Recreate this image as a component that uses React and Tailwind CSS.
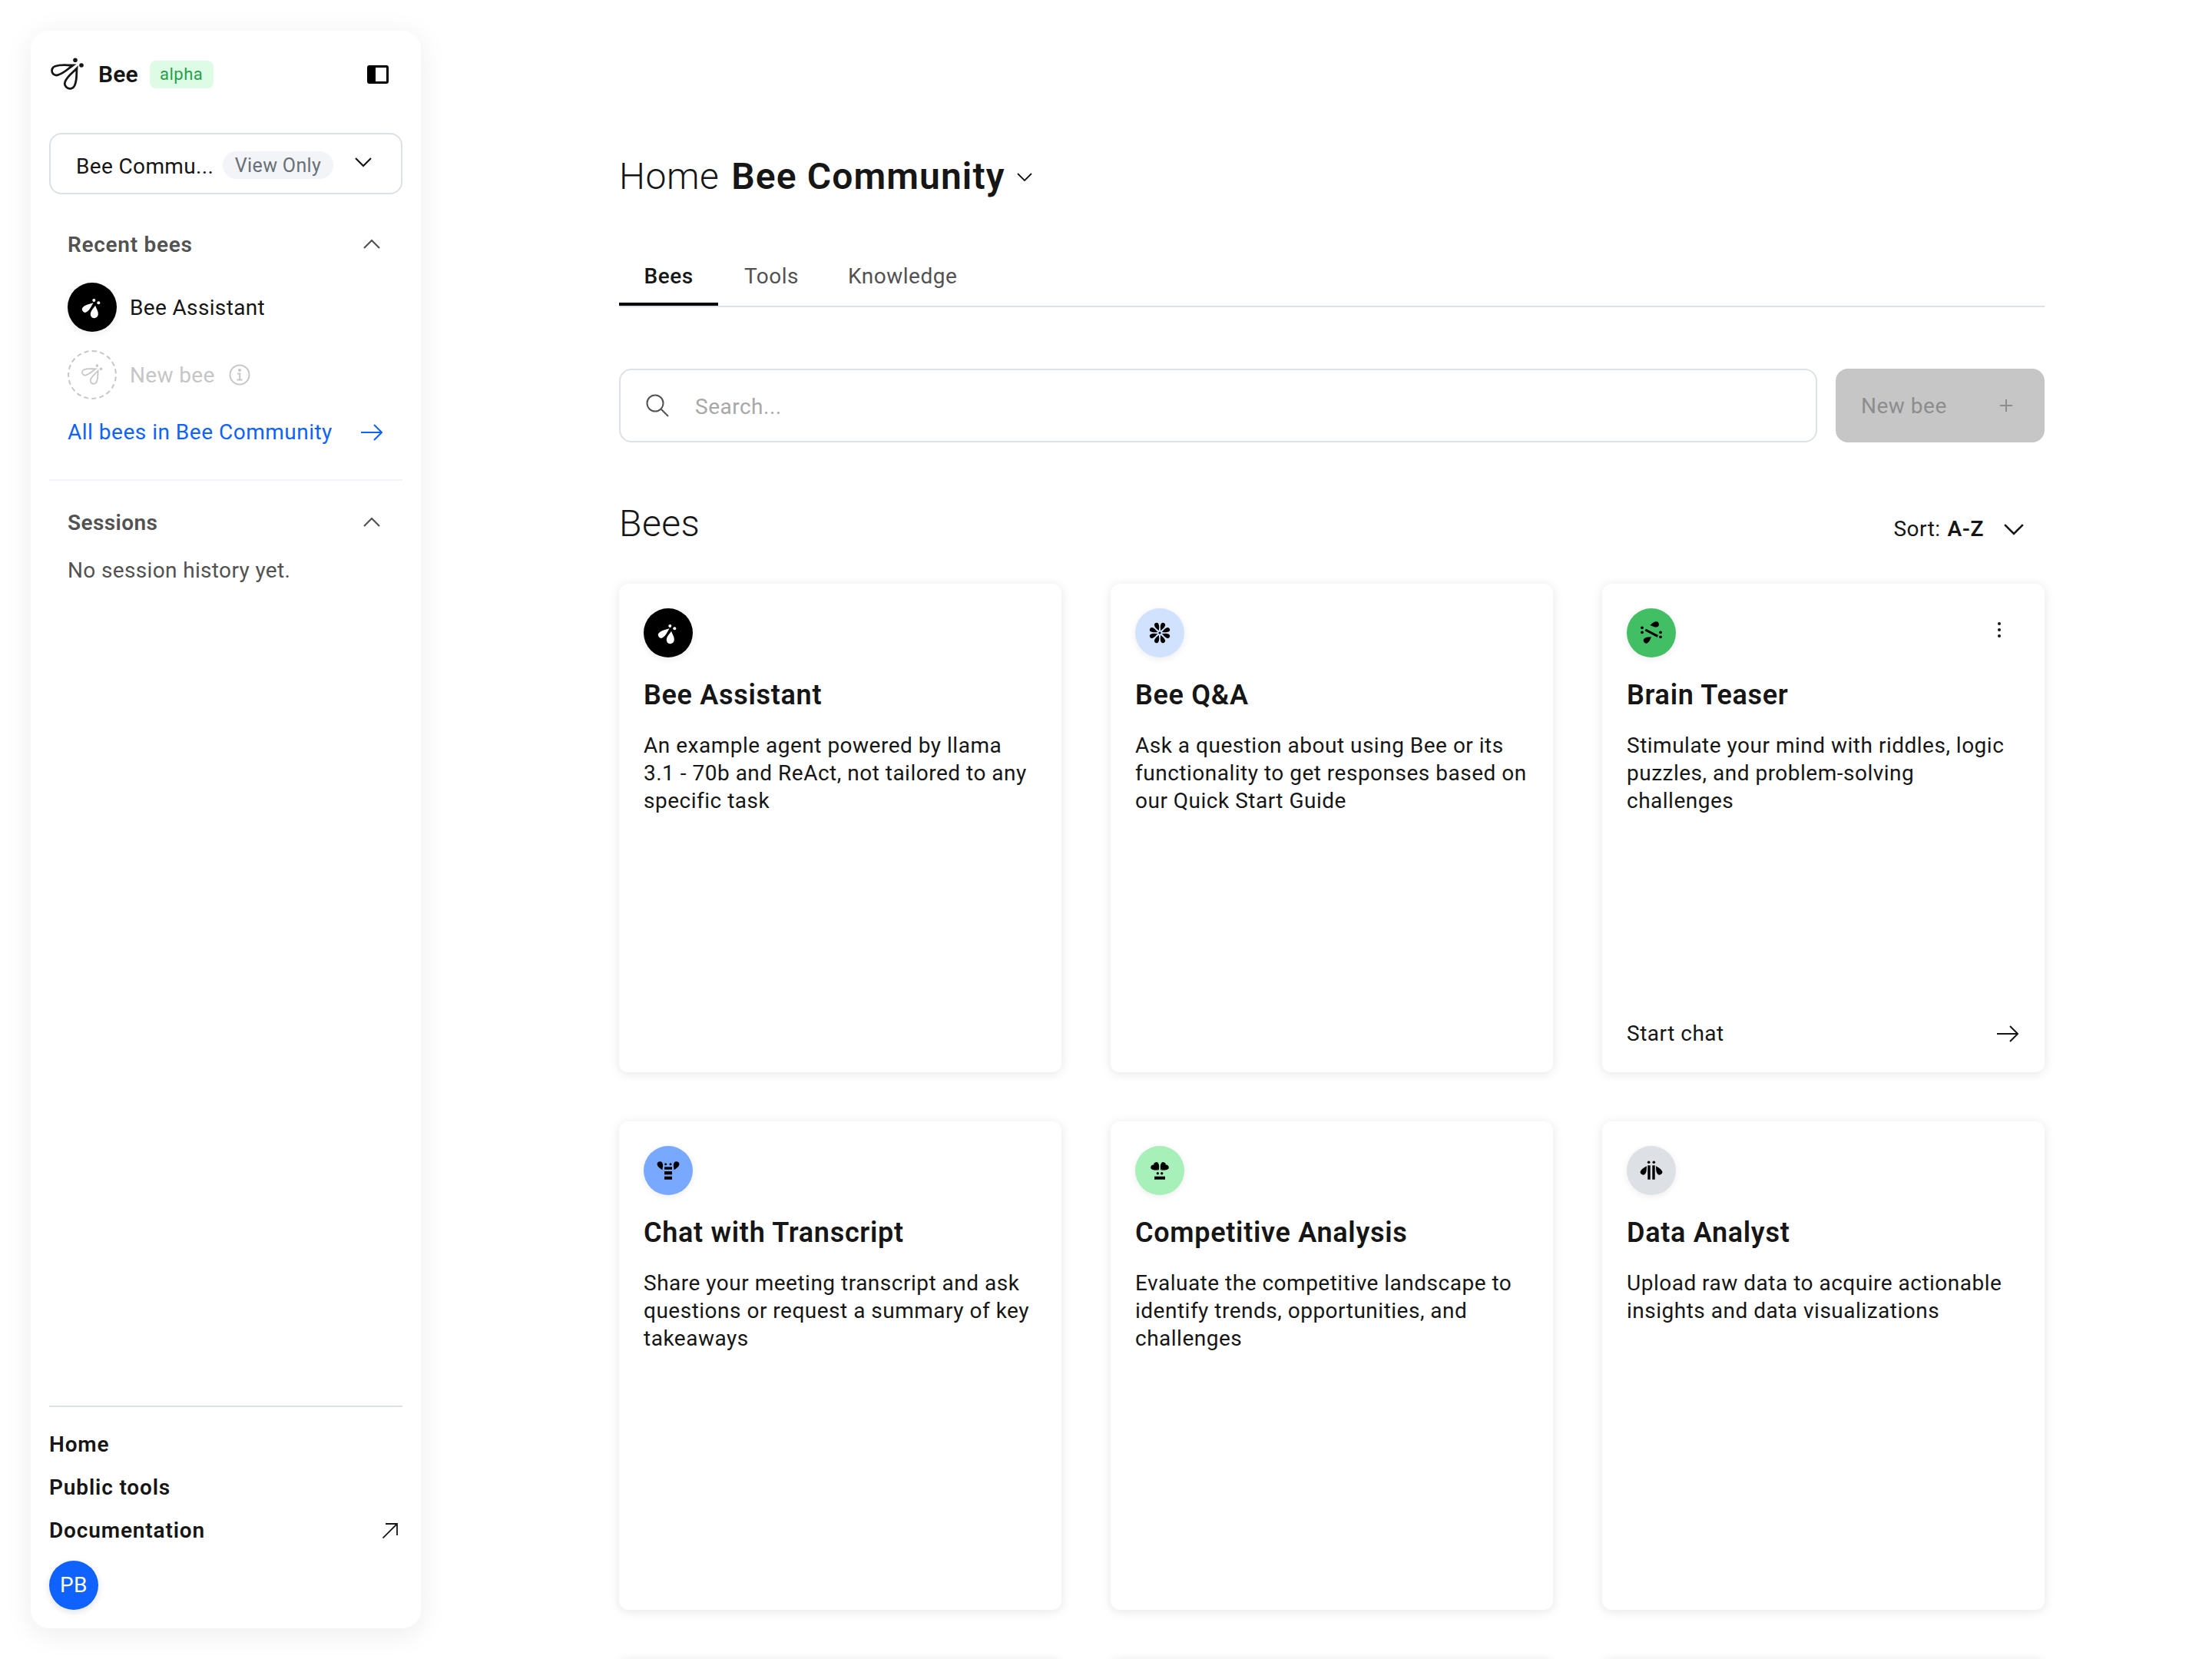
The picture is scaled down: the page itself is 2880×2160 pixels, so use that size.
import React from "react";

const Chevron = ({ up, size = 32, className = "" }) => (
  <svg width={size} height={size} viewBox="0 0 32 32" fill="none" stroke="currentColor" strokeWidth="2.2" className={className}>
    <path d={up ? "M6 21 16 11 26 21" : "M6 11 16 21 26 11"} />
  </svg>
);

const ArrowRight = ({ className = "" }) => (
  <svg width="28" height="28" viewBox="0 0 28 28" fill="none" stroke="currentColor" strokeWidth="2" className={className}>
    <path d="M0 14H27M17 4 27 14 17 24" />
  </svg>
);

// tip at x,y, round end pointing away at angle a
const Drop = ({ x, y, a, l, r }) => (
  <path
    transform={`translate(${x} ${y}) rotate(${a})`}
    d={`M0 0C${0.4 * r} ${0.35 * l} ${r} ${0.6 * l} ${r} ${l}A${r} ${r} 0 1 1 ${-r} ${l}C${-r} ${0.6 * l} ${-0.4 * r} ${0.35 * l} 0 0Z`}
  />
);

const Logo = ({ className = "", color = "#161616" }) => (
  <svg width="44" height="44" viewBox="0 0 44 44" className={`overflow-visible ${className}`}>
    <g fill="none" stroke={color} strokeWidth="2.8">
      <Drop x={29} y={10} a={72} l={22.6} r={6} />
      <Drop x={34} y={14} a={24.5} l={21.7} r={6.7} />
    </g>
    <circle cx="32" cy="3.3" r="2.8" fill={color} />
    <circle cx="40" cy="10" r="2.8" fill={color} />
  </svg>
);

const AssistantGlyph = () => (
  <g fill="#fff">
    <Drop x={1.7} y={-5.7} a={52} l={13.6} r={4} />
    <Drop x={4} y={-2.3} a={6} l={11.6} r={5} />
    <circle cx="2.3" cy="-9" r="2" />
    <circle cx="8.3" cy="-5.7" r="2" />
  </g>
);

const QaGlyph = () => (
  <g fill="#000">
    {[-158, -112, -68, -22, 22, 68, 112, 158].map((a) => (
      <Drop key={a} x={Math.sin((a * Math.PI) / 180) * 3} y={-Math.cos((a * Math.PI) / 180) * 3} a={a + 180} l={8} r={2.9} />
    ))}
    <circle r="1.6" />
  </g>
);

const TeaserGlyph = () => (
  <g fill="#000">
    <Drop x={-1.7} y={-10} a={-98} l={8} r={3.6} />
    <Drop x={0} y={5.3} a={55} l={8} r={3.6} />
    <path d="M-7.7 -4 8.3 4.3" stroke="#000" strokeWidth="3" />
    <circle cx="-12" cy="-6.7" r="1.9" />
    <circle cx="-12" cy="-0.7" r="1.9" />
    <circle cx="12" cy="-0.7" r="1.9" />
    <circle cx="12" cy="5.3" r="1.9" />
  </g>
);

const TranscriptGlyph = () => (
  <g fill="#000">
    <Drop x={-7.7} y={-0.7} a={158} l={8} r={3.6} />
    <Drop x={7.7} y={-0.7} a={202} l={8} r={3.6} />
    <circle cx="-3.3" cy="-8.3" r="1.5" />
    <circle cx="3" cy="-8.3" r="1.5" />
    <rect x="-5" y="-4.7" width="10" height="3.4" />
    <rect x="-5" y="1" width="10" height="4.3" />
    <rect x="-5" y="7.7" width="10" height="4" />
  </g>
);

const CompetitiveGlyph = () => (
  <g fill="#000">
    <Drop x={-1} y={-0.5} a={154} l={8} r={3.2} />
    <Drop x={1} y={-0.5} a={206} l={8} r={3.2} />
    <Drop x={-2} y={-0.5} a={120} l={7.5} r={3.2} />
    <Drop x={2} y={-0.5} a={240} l={7.5} r={3.2} />
    <circle cx="-2.7" cy="3.7" r="1.7" />
    <circle cx="2.7" cy="3.7" r="1.7" />
    <rect x="-7" y="7.7" width="14" height="4" />
  </g>
);

const DataGlyph = () => (
  <g fill="#000">
    <circle cx="-3.3" cy="-10.7" r="1.8" />
    <circle cx="3.3" cy="-10.7" r="1.8" />
    <rect x="-4.7" y="-6.7" width="3.4" height="18.4" />
    <rect x="1.3" y="-6.7" width="3.4" height="18.4" />
    <Drop x={-6} y={-5.7} a={31} l={9} r={3.6} />
    <Drop x={6} y={-5.7} a={-31} l={9} r={3.6} />
  </g>
);

const BeeAvatar = ({ bg, children }) => (
  <div className={`w-[64px] h-[64px] rounded-full shrink-0 shadow-[0_2px_10px_rgba(0,0,0,0.08)] ${bg}`}>
    <svg width="64" height="64" viewBox="-32 -32 64 64">
      {children}
    </svg>
  </div>
);

const bees = [
  {
    name: "Bee Assistant",
    bg: "bg-black",
    glyph: <AssistantGlyph />,
    desc: ["An example agent powered by llama", "3.1 - 70b and ReAct, not tailored to any", "specific task"],
  },
  {
    name: "Bee Q&A",
    bg: "bg-[#d0e2ff]",
    glyph: <QaGlyph />,
    desc: ["Ask a question about using Bee or its", "functionality to get responses based on", "our Quick Start Guide"],
  },
  {
    name: "Brain Teaser",
    bg: "bg-[#42be65]",
    glyph: <TeaserGlyph />,
    own: true,
    desc: ["Stimulate your mind with riddles, logic", "puzzles, and problem-solving", "challenges"],
  },
  {
    name: "Chat with Transcript",
    bg: "bg-[#78a9ff]",
    glyph: <TranscriptGlyph />,
    desc: ["Share your meeting transcript and ask", "questions or request a summary of key", "takeaways"],
  },
  {
    name: "Competitive Analysis",
    bg: "bg-[#a7f0ba]",
    glyph: <CompetitiveGlyph />,
    desc: ["Evaluate the competitive landscape to", "identify trends, opportunities, and", "challenges"],
  },
  {
    name: "Data Analyst",
    bg: "bg-[#dde1e6]",
    glyph: <DataGlyph />,
    desc: ["Upload raw data to acquire actionable", "insights and data visualizations"],
  },
];

const BeeCard = ({ bee }) => (
  <div className="relative flex flex-col p-[32px] rounded-[12px] bg-white shadow-[0_2px_14px_rgba(0,0,0,0.1)]">
    <BeeAvatar bg={bee.bg}>{bee.glyph}</BeeAvatar>
    {bee.own && (
      <div className="absolute top-[50px] right-[57px] flex flex-col gap-[4px]">
        <span className="w-[4px] h-[4px] rounded-full bg-[#161616]" />
        <span className="w-[4px] h-[4px] rounded-full bg-[#161616]" />
        <span className="w-[4px] h-[4px] rounded-full bg-[#161616]" />
      </div>
    )}
    <h3 className="mt-[27px] text-[36px] leading-[44px] font-semibold tracking-[0.7px] text-[#161616]">{bee.name}</h3>
    <p className="mt-[26px] text-[28px] leading-[36px] text-[#161616]">
      {bee.desc.map((line) => (
        <span key={line} className="block whitespace-nowrap">
          {line}
        </span>
      ))}
    </p>
    {bee.own && (
      <div className="mt-auto flex items-center justify-between pr-[2px] text-[28px] leading-[36px] text-[#161616]">
        <span className="pt-[1px]">Start chat</span>
        <ArrowRight />
      </div>
    )}
  </div>
);

const Sidebar = () => (
  <aside className="m-[40px] w-[508px] h-[2080px] shrink-0 flex flex-col rounded-[24px] bg-white px-[24px] pt-[35px] pb-[24px] tracking-[0.35px] shadow-[0_6px_36px_rgba(0,0,0,0.08)]">
    <div className="flex items-center h-[43px] pl-[2px] pr-[18px]">
      <Logo />
      <span className="ml-[18px] text-[30px] font-semibold tracking-[0.1px] text-[#161616]">Bee</span>
      <span className="ml-[15px] w-[83px] h-[36px] rounded-[8px] bg-[#defbe6] text-[22px] tracking-[0.5px] leading-[36px] text-center text-[#24a148]">alpha</span>
      <svg width="28" height="24" viewBox="0 0 28 24" className="ml-auto">
        <rect x="1.5" y="1.5" width="25" height="21" rx="1.5" fill="#fff" stroke="#000" strokeWidth="3" />
        <rect x="1" y="1" width="10" height="22" fill="#000" />
      </svg>
    </div>

    <div className="mt-[55px] h-[80px] flex items-center rounded-[16px] border-2 border-[#dde1e6] pl-[33px] text-[28px] text-[#161616]">
      <span className="w-[191px] pt-[7px] whitespace-nowrap">Bee Commu...</span>
      <span className="w-[144px] h-[36px] mt-[4px] rounded-full bg-[#f2f4f8] text-[25px] leading-[37px] text-center text-[#697077]">View Only</span>
      <Chevron className="ml-[23px] -mt-[4px]" />
    </div>

    <div className="mt-[47px] pl-[24px] pr-[24px] flex items-center justify-between h-[36px] text-[28px] font-semibold tracking-[0.7px] text-[#525252]">
      <span className="pt-[2px]">Recent bees</span>
      <Chevron up />
    </div>
    <div className="mt-[32px] pl-[24px] flex items-center gap-[17px] text-[28px] text-[#161616]">
      <BeeAvatar bg="bg-black">
        <AssistantGlyph />
      </BeeAvatar>
      <span className="pt-[2px]">Bee Assistant</span>
    </div>
    <div className="mt-[24px] pl-[24px] flex items-center gap-[17px] text-[28px] text-[#c6c6c6]">
      <div className="w-[64px] h-[64px] rounded-full border-2 border-dashed border-[#c6c6c6] flex items-center justify-center">
        <Logo color="#c6c6c6" className="w-[28px] h-[28px]" />
      </div>
      <span className="pt-[2px] w-[112px]">New bee</span>
      <svg width="28" height="28" viewBox="0 0 28 28" fill="none" stroke="#c6c6c6" strokeWidth="2">
        <circle cx="14" cy="14" r="12.5" />
        <path d="M11 12.5h3.2V20M10.5 20.5h7" />
        <circle cx="14" cy="8" r="1" fill="#c6c6c6" />
      </svg>
    </div>
    <div className="mt-[25px] pl-[24px] pr-[26px] flex items-center justify-between h-[36px] text-[28px] tracking-[0.5px] text-[#0f62fe]">
      All bees in Bee Community
      <ArrowRight />
    </div>

    <div className="mt-[43px] h-[2px] bg-[#f2f4f8]" />

    <div className="mt-[36px] pl-[24px] pr-[24px] flex items-center justify-between h-[36px] text-[28px] font-semibold tracking-[0.4px] text-[#525252]">
      <span className="pt-[2px]">Sessions</span>
      <Chevron up />
    </div>
    <p className="mt-[27px] pl-[24px] text-[28px] leading-[36px] text-[#525252]">No session history yet.</p>

    <div className="mt-auto h-[2px] bg-[#dde1e6]" />
    <nav className="mt-[31px] flex flex-col gap-[20px] text-[28px] leading-[36px] font-semibold tracking-[0.85px] text-[#161616]">
      <span>Home</span>
      <span>Public tools</span>
      <div className="flex items-center justify-between pr-[6px]">
        Documentation
        <svg width="20" height="20" viewBox="0 0 20 20" fill="none" stroke="#161616" strokeWidth="1.8">
          <path d="M0.5 19.5 19 1M4 1H19V16" />
        </svg>
      </div>
    </nav>
    <div className="mt-[21px] w-[64px] h-[64px] rounded-full bg-[#0f62fe] flex items-center justify-center text-[28px] text-white shadow-[0_3px_10px_rgba(0,0,0,0.12)]">
      PB
    </div>
  </aside>
);

export default function App() {
  return (
    <div className="flex h-[2160px] overflow-hidden bg-white font-['Roboto',sans-serif] tracking-[0.5px]">
      <Sidebar />
      <main className="flex-1 pl-[218px] pr-[218px] pt-[202px]">
        <div className="flex items-center h-[56px] text-[48px] text-[#161616]">
          <span className="font-light">Home</span>
          <span className="ml-[16px] font-semibold tracking-[1.1px]">Bee Community</span>
          <svg width="24" height="24" viewBox="0 0 24 24" fill="none" stroke="#161616" strokeWidth="1.8" className="ml-[13px]">
            <path d="M3 8 12 17 21 8" />
          </svg>
        </div>

        <div className="mt-[64px] flex border-b-2 border-[#dde1e6] text-[28px]">
          <div className="h-[76px] w-[129px] flex items-center justify-center border-y-4 border-transparent border-b-black font-medium text-[#161616]">Bees</div>
          <div className="h-[76px] ml-[34px] flex items-center border-y-4 border-transparent text-[#525252]">Tools</div>
          <div className="h-[76px] ml-[64px] flex items-center border-y-4 border-transparent text-[#525252]">Knowledge</div>
        </div>

        <div className="mt-[80px] flex gap-[24px] h-[96px]">
          <div className="flex-1 flex items-center rounded-[16px] border-2 border-[#dde1e6] pl-[33px] text-[28px] text-[#a8a8a8]">
            <svg width="30" height="30" viewBox="0 0 30 30" fill="none" stroke="#525252" strokeWidth="2">
              <circle cx="12" cy="12" r="10.5" />
              <path d="M19.5 19.5 29 29" />
            </svg>
            <span className="ml-[34px] pt-[4px]">Search...</span>
          </div>
          <div className="w-[272px] flex items-center justify-between rounded-[16px] bg-[#c6c6c6] pl-[33px] pr-[42px] text-[28px] text-[#8d8d8d]">
            <span className="pt-[2px]">New bee</span>
            <svg width="16" height="16" viewBox="0 0 16 16" stroke="#8d8d8d" strokeWidth="2">
              <path d="M8 0V16M0 8H16" />
            </svg>
          </div>
        </div>

        <div className="mt-[76px] mb-[48px] h-[60px] flex items-center justify-between">
          <h2 className="text-[48px] font-light text-[#161616]">Bees</h2>
          <div className="pt-[14px] pr-[21px] flex items-center text-[28px] text-[#161616]">
            Sort:
            <span className="ml-[9px] font-semibold">A-Z</span>
            <Chevron size={38} className="ml-[20px]" />
          </div>
        </div>

        <div className="grid grid-cols-3 gap-[64px] auto-rows-[636px]">
          {bees.map((bee) => (
            <BeeCard key={bee.name} bee={bee} />
          ))}
          <div className="rounded-[12px] bg-white shadow-[0_2px_14px_rgba(0,0,0,0.1)]" />
          <div className="rounded-[12px] bg-white shadow-[0_2px_14px_rgba(0,0,0,0.1)]" />
          <div className="rounded-[12px] bg-white shadow-[0_2px_14px_rgba(0,0,0,0.1)]" />
        </div>
      </main>
    </div>
  );
}
